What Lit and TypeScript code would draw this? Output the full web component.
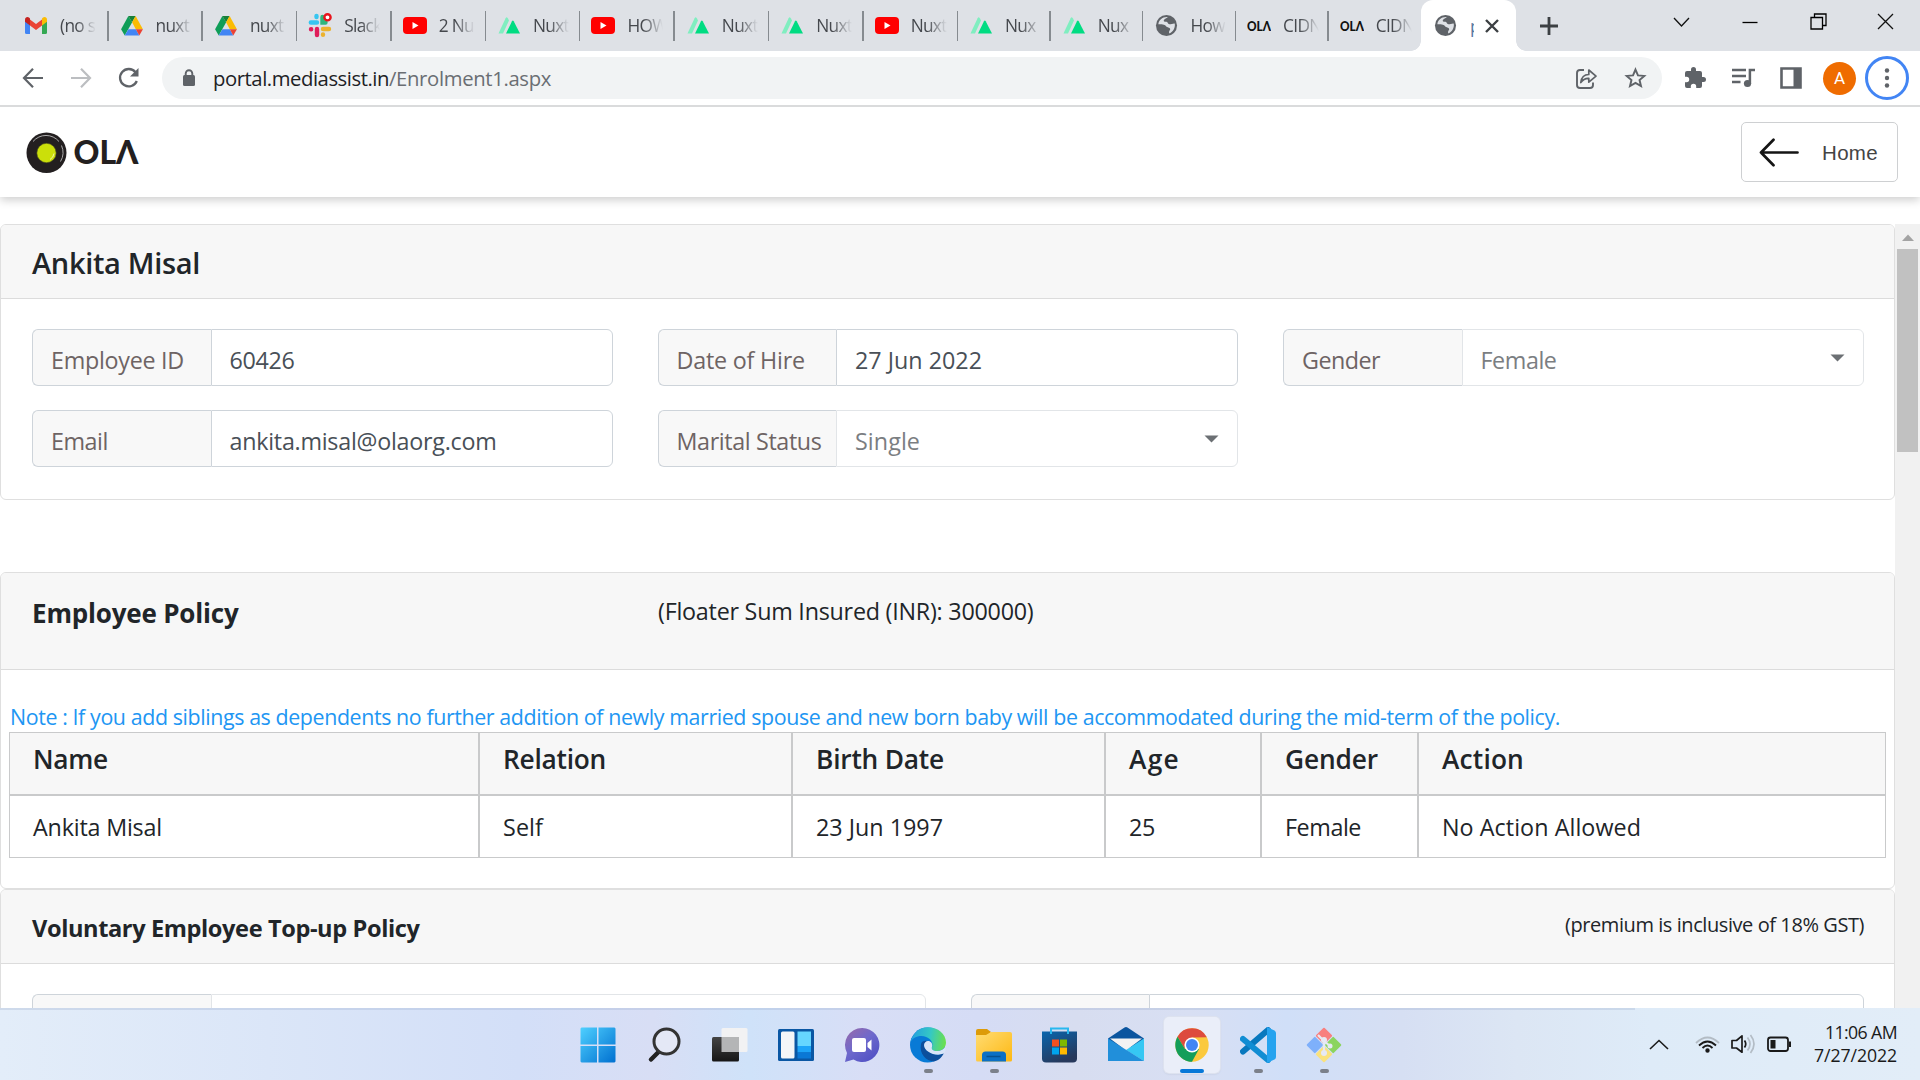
import { LitElement, html, css, svg, TemplateResult } from "lit";
import { customElement, property } from "lit/decorators.js";
import { classMap } from "lit/directives/class-map.js";

const drive = svg`<svg viewBox="0 0 24 22" width="22" height="20"><path fill="#0f9d58" d="M8 0 0 14.500 4 21.500 12.200 7z"/><path fill="#188038" d="M8 0h8l-3.900 7z"/><path fill="#fbbc04" d="M16 0 24 14.500h-7.800L12.100 7z"/><path fill="#4285f4" d="M8 14.500h8.200L20 21.500H4z"/><path fill="#ea4335" d="M16.200 14.500H24l-4 7z"/></svg>`;
const gmail = svg`<svg viewBox="0 0 22 17" width="22" height="17"><path fill="#4285f4" d="M0 4h5v13H1.500A1.500 1.500 0 0 1 0 15.500z"/><path fill="#34a853" d="M17 4h5v11.500a1.500 1.500 0 0 1-1.500 1.500H17z"/><path fill="#ea4335" d="M5 2.500 11 7l6-4.500V8.500L11 13 5 8.500z"/><path fill="#c5221f" d="M0 2.500C0 .2 2.500-.6 4 .600L5 1.500v7L0 4.800z"/><path fill="#fbbc04" d="M22 2.500C22 .2 19.500-.6 18 .600L17 1.500v7l5-3.700z"/></svg>`;
const slack = svg`<svg viewBox="0 0 24 25" width="24" height="25"><g stroke-width="4.400" stroke-linecap="round" fill="none"><path stroke="#36c5f0" d="M2.800 9.500H9M8.500 3v1"/><path stroke="#2eb67d" d="M14.500 4v5.500h3"/><path stroke="#ecb22e" d="M21 16h-6M15 21.500v.2"/><path stroke="#e01e5a" d="M9 22v-6M3 16.200h.2"/></g><circle cx="19.500" cy="4.300" r="3.100" fill="#fff" stroke="#e8141c" stroke-width="2.400"/></svg>`;
const youtube = svg`<svg viewBox="0 0 24 17" width="24" height="17"><rect width="24" height="17" rx="4" fill="#f00"/><path fill="#fff" d="M9.500 5v7l6-3.500z"/></svg>`;
const nuxt = svg`<svg viewBox="0 0 24 17" width="24" height="17"><path fill="#80eec0" d="M1.500 16.500 8.600 1.200q1-1.700 2.200 0L12 3.500 6 16.500z"/><path fill="#00dc82" d="M9 16.500 15 4.200q.8-1.300 1.700 0L23 16.500z"/></svg>`;
const globe = svg`<svg viewBox="0 0 24 24" width="23" height="23"><circle cx="12" cy="12" r="11" fill="#5f6368"/><path fill="#dee1e6" d="M13.500 3.200c-1 1.300-3.700 1.800-4.300 3.200-.5 1.300 1 1.800 2.600 1.700 1.700 0 1.300 2.400 3.300 2.700 1.700.2 2.700-1 5.500-.8.8 4.300-1.700 8.700-5.500 10.300-1-1-.3-2.600.5-3.500 1-1.300-.6-2.700-2.300-3-2.200-.3-1.700-2.300-4-2.600-2.200-.3-3.500-.7-5.800-.5C3.800 6.500 8 2.600 13.500 3.200z"/><path fill="#5f6368" d="M13.800 3.300l4.600 2.500 1.700 4c-2-1-2.500.7-4.500.6-1.600-.3-1-2-2.300-2.700s-2.600 0-2.900-.9c-.2-1.200 2.800-1.600 3.400-3.500z"/></svg>`;
const olaMini = svg`<svg viewBox="0 0 24 14" width="24" height="14"><text x="0" y="11.500" textLength="24" lengthAdjust="spacingAndGlyphs" font-family="Lato, sans-serif" font-weight="900" font-size="13" fill="#111">OLΛ</text></svg>`;

type Tab = { icon: TemplateResult; title: string; kind?: string };
const TABS: Tab[] = [
  { icon: gmail, title: "(no s", kind: "first" },
  { icon: drive, title: "nuxt" }, { icon: drive, title: "nuxt" },
  { icon: slack, title: "Slack" }, { icon: youtube, title: "2 Nu" },
  { icon: nuxt, title: "Nuxt" }, { icon: youtube, title: "HOW" },
  { icon: nuxt, title: "Nuxt" }, { icon: nuxt, title: "Nuxt" },
  { icon: youtube, title: "Nuxt" },
  { icon: nuxt, title: "Nux", kind: "slim" }, { icon: nuxt, title: "Nux", kind: "slim" },
  { icon: globe, title: "How", kind: "slim" },
  { icon: olaMini, title: "CIDN", kind: "slim" }, { icon: olaMini, title: "CIDN", kind: "slim" },
];

/* A line of text tracked so that it fills a given width. */
@customElement("fit-label")
class FitLabel extends LitElement {
  static styles = css`:host{display:inline-block;white-space:pre}span{display:inline-block}`;
  @property() text = "";
  @property({ type: Number }) w = 0;
  firstUpdated() {
    const s = this.renderRoot.querySelector("span")!;
    const natural = s.getBoundingClientRect().width;
    if (this.w) s.style.letterSpacing = `${(this.w - natural) / this.text.length}px`;
  }
  render() { return html`<span>${this.text}</span>`; }
}

@customElement("browser-chrome")
class BrowserChrome extends LitElement {
  static styles = css`
    :host{display:block;font-family:"Open Sans","Noto Sans",sans-serif}
    svg{display:block;flex:none}
    .strip{height:51px;background:#dee1e6;display:flex}
    .tab{width:94.4px;flex:none;box-sizing:border-box;display:flex;align-items:center;padding-left:11px;position:relative;color:#45484d;font-size:17.300px}
    .tab.first{width:108.5px;padding-left:24px}
    .tab.slim{width:92.7px}
    .tab::after{content:"";position:absolute;right:0;top:11px;width:1.500px;height:30px;background:#868b90}
    .tab.last::after{display:none}
    .ico{width:24px;display:flex;justify-content:center;margin-right:12px;flex:none}
    .name{width:36px;overflow:hidden;white-space:nowrap;letter-spacing:-.7px;line-height:30px;-webkit-mask-image:linear-gradient(90deg,#000 45%,transparent 100%);mask-image:linear-gradient(90deg,#000 45%,transparent 100%)}
    .active{width:95px;flex:none;background:#fff;border-radius:12px 12px 0 0;display:flex;align-items:center;padding-left:12.500px;box-sizing:border-box;position:relative;font-size:17.500px;color:#45484d}
    .active::before,.active::after{content:"";position:absolute;bottom:0;width:10px;height:10px}
    .active::before{left:-10px;background:radial-gradient(circle at 0 0,transparent 9.500px,#fff 10px)}
    .active::after{right:-10px;background:radial-gradient(circle at 100% 0,transparent 9.500px,#fff 10px)}
    .pp{width:4px;overflow:hidden;margin:0 11px 0 13px;color:#55779f}
    .plus{margin-left:23px;align-self:center}
    .win{margin-left:auto;display:flex;height:43px;align-items:center;padding-right:26px}
    .win svg+svg{margin-left:50px}
    .bar{height:54px;background:#fff;display:flex;align-items:center;padding-left:22px;border-bottom:2px solid #dadbdc}
    .nav{display:flex;gap:26px;margin-right:22px}
    .omni{width:1500px;height:42px;border-radius:21px;background:#f1f3f4;display:flex;align-items:center;padding:0 15px 0 20px;box-sizing:border-box;font-size:20.300px;color:#6a6e73}
    .omni .url{display:flex;margin-left:17px;line-height:40px}
    .host{color:#202124}
    .omni .end{margin-left:auto;display:flex;gap:26px}
    .ext{display:flex;align-items:center;gap:24px;margin-left:21px}
    .avatar{width:33px;height:33px;border-radius:50%;background:#ef6c00;color:#fff;font:17px/33px Roboto,sans-serif;text-align:center;margin-left:-3px}
    .menu{width:38px;height:38px;border:3px solid #4285f4;border-radius:50%;display:grid;place-items:center;margin-left:-15px}
  `;
  render() {
    return html`
      <div class="strip">
        ${TABS.map((t, i) => html`<div class=${classMap({ tab: true, first: t.kind === "first", slim: t.kind === "slim", last: i === TABS.length - 1 })}>
          <span class="ico">${t.icon}</span><span class="name">${t.title}</span></div>`)}
        <div class="active">${globe}<span class="pp">p</span><svg width="14" height="14"><path d="M1 1l12 12M13 1 1 13" stroke="#3c4043" stroke-width="2.400"/></svg></div>
        <svg class="plus" width="20" height="20"><path d="M10 1v18M1 10h18" stroke="#3c4043" stroke-width="2.800"/></svg>
        <div class="win">
          <svg width="17" height="12"><path d="M1 2l7.500 8L16 2" fill="none" stroke="#111" stroke-width="1.300"/></svg>
          <svg width="20" height="16"><path d="M2.500 8.500h15" stroke="#000" stroke-width="1.300"/></svg>
          <svg width="17" height="17"><path d="M1 4.500h11.500V16H1zM4.500 4.500V1H16v11.500h-3.500" fill="none" stroke="#000" stroke-width="1.300"/></svg>
          <svg width="17" height="17"><path d="M1 1l15 15M16 1 1 16" stroke="#111" stroke-width="1.300"/></svg>
        </div>
      </div>
      <div class="bar">
        <div class="nav">
          <svg width="22" height="22"><path d="M11 1.800 2 11l9 9.200M2 11h19" fill="none" stroke="#5f6368" stroke-width="2.200"/></svg>
          <svg width="22" height="22"><path d="M11 1.800 20 11l-9 9.200M20 11H1" fill="none" stroke="#bcbec1" stroke-width="2.200"/></svg>
          <svg width="22" height="22"><path d="M18.800 14A8.700 8.700 0 1 1 17.500 5.200" fill="none" stroke="#5f6368" stroke-width="2.300"/><path d="M20.500 1v8.500H12z" fill="#5f6368"/></svg>
        </div>
        <div class="omni">
          <svg width="14" height="18"><rect x="1" y="6" width="12" height="11" rx="1.500" fill="#5f6368"/><path d="M3.700 7V4.500a3.300 3.300 0 0 1 6.600 0V7" fill="none" stroke="#5f6368" stroke-width="1.900"/></svg>
          <span class="url"><fit-label class="host" text="portal.mediassist.in" w="176"></fit-label><fit-label text="/Enrolment1.aspx" w="162"></fit-label></span>
          <div class="end">
            <svg width="23" height="22"><path d="M9 3H5Q2 3 2 6v12q0 3 3 3h10q3 0 3-3v-2.500" fill="none" stroke="#5f6368" stroke-width="1.900"/><path d="M5.800 15.500c.6-5 3.500-8 8-8V3l7.200 6.200-7.200 6V11.300c-4-.2-6 1.200-8 4.200z" fill="none" stroke="#5f6368" stroke-width="1.700" stroke-linejoin="round"/></svg>
            <svg width="23" height="22" viewBox="0 0 24 24"><path d="m12 2.800 2.700 6.300 6.900.6-5.200 4.500 1.600 6.700-6-3.500-6 3.500 1.600-6.700-5.200-4.500 6.900-.6z" fill="none" stroke="#5f6368" stroke-width="2.100"/></svg>
          </div>
        </div>
        <div class="ext">
          <svg width="24" height="24" viewBox="0 0 24 24"><path fill="#5f6368" d="M20.500 11H19V7a2 2 0 0 0-2-2h-4V3.500a2.500 2.500 0 0 0-5 0V5H4a2 2 0 0 0-2 2v3.800h1.500a2.700 2.700 0 0 1 0 5.400H2V20a2 2 0 0 0 2 2h3.800v-1.500a2.700 2.700 0 0 1 5.400 0V22H17a2 2 0 0 0 2-2v-4h1.500a2.500 2.500 0 0 0 0-5z"/></svg>
          <svg width="25" height="22"><path d="M1 3h14M1 9h14M1 15h8.500" stroke="#5f6368" stroke-width="2.300"/><circle cx="16.500" cy="16.500" r="3.600" fill="#5f6368"/><path d="M18.900 17V3H24" fill="none" stroke="#5f6368" stroke-width="2.500"/></svg>
          <svg width="22" height="22"><path d="M1.500 1.500h19v19h-19z" fill="none" stroke="#5f6368" stroke-width="2.600"/><path d="M13.500 1h7v20h-7z" fill="#5f6368"/></svg>
          <div class="avatar">A</div>
          <div class="menu"><svg width="6" height="20"><g fill="#5f6368"><circle cx="3" cy="2.500" r="2.200"/><circle cx="3" cy="10" r="2.200"/><circle cx="3" cy="17.500" r="2.200"/></g></svg></div>
        </div>
      </div>`;
  }
}

@customElement("input-field")
class InputField extends LitElement {
  static styles = css`
    :host{display:block}
    .box{display:flex;height:57px;box-sizing:border-box;font-size:23.300px;line-height:30px}
    .label,.value{box-sizing:border-box;border:1.500px solid #ced4da;padding:14.500px 0 0 18px}
    .label{width:178.500px;background:#f8f8f8;border-radius:6px 0 0 6px;color:#6e6464;border-right:0;flex:none}
    .value{flex:1;border-radius:0 6px 6px 0;color:#495057;display:flex;background:#fff}
    .select .value{border-color:#e2e5e8;color:#7b7e82}
    svg{margin:9px 18px 0 auto}
  `;
  @property() label = "";
  @property() value = "";
  @property({ type: Number }) lw = 0;
  @property({ type: Number }) vw = 0;
  @property({ type: Boolean }) select = false;
  render() {
    return html`<div class=${classMap({ box: true, select: this.select })}>
      <div class="label"><fit-label .text=${this.label} .w=${this.lw}></fit-label></div>
      <div class="value"><fit-label .text=${this.value} .w=${this.vw}></fit-label>
      ${this.select && this.value ? html`<svg width="15" height="8"><path d="M.5.500h14L7.500 7.500z" fill="#6c7074"/></svg>` : ""}</div></div>`;
  }
}

const COLUMNS: [string, number, string, number][] = [
  ["Name", 75, "Ankita Misal", 129], ["Relation", 103, "Self", 40],
  ["Birth Date", 128, "23 Jun 1997", 127], ["Age", 51, "25", 26],
  ["Gender", 93, "Female", 76], ["Action", 82, "No Action Allowed", 199],
];

@customElement("portal-page")
class PortalPage extends LitElement {
  static styles = css`
    :host{display:flex;flex-direction:column;height:901px;overflow:hidden;background:#fff;font-family:"Open Sans","Noto Sans",sans-serif;color:#212529}
    .top{height:90px;flex:none;display:flex;align-items:center;justify-content:space-between;padding:0 22px 0 26px;box-shadow:0 3px 9px rgba(0,0,0,.2);box-sizing:border-box;position:relative}
    .home{width:157px;height:60px;box-sizing:border-box;border:1.500px solid #ced0d2;border-radius:5px;display:flex;align-items:center;padding-left:17px;gap:23px;font:20.500px/26px "Liberation Sans",Arial,sans-serif;color:#444}
    .home fit-label{padding-top:2px}
    .main{display:flex;margin-top:27px;height:784px;overflow:hidden}
    .content{width:1895px;flex:none;height:784px;overflow:hidden}
    .card{border:1.500px solid #dfdfdf;border-radius:6px;box-sizing:border-box;overflow:hidden}
    .who{height:276px;margin-bottom:72px}
    .policy{height:317px}
    .topup{height:300px}
    .head{background:#f7f7f7;border-bottom:1.500px solid #dcdcdc;box-sizing:border-box;height:74px;padding:0 30px 0 31px;display:flex;line-height:74px}
    .head .t1{font-size:29px;font-weight:600;padding-top:1px}
    .policy .head{height:97px}
    .t2{font-size:26px;font-weight:700;width:626px;padding-top:3px}
    .floater{font-size:23.300px;padding-top:1px}
    .t3{font-size:23.600px;font-weight:700;padding-top:1px}
    .gst{font-size:20px;margin-left:auto;line-height:70px}
    .grid{display:grid;grid-template-columns:repeat(3,580.500px);column-gap:45px;row-gap:24px;padding:30px 30px 0 31px}
    .duo{display:grid;grid-template-columns:893.500px 893.500px;column-gap:45px;padding:30px 30px 0 31px}
    .note{font-size:21.400px;line-height:30px;padding:32px 8px 0 9px;color:#2196f3}
    .note fit-label{display:block;height:30px}
    .table{margin:0 8px;display:grid;grid-template-columns:468px 313px 313px 156px 157px 1fr;border:1.500px solid #c9cacb;box-sizing:border-box;height:126px;grid-template-rows:63px 1fr}
    .th,.td{border-left:2px solid #c9cacb;padding-left:23px;display:flex;align-items:center}
    .th{background:#f7f7f7;font-size:26.300px;font-weight:600;border-bottom:2px solid #c9cacb;padding-bottom:9px;box-sizing:border-box}
    .td{font-size:23.300px;padding-top:1px}
    .start{border-left:0}
    .scroll{width:25px;background:#f1f1f1;height:784px;display:flex;flex-direction:column;align-items:center}
    .scroll svg{margin:10px 0 8px;display:block}
    .thumb{width:21px;height:203px;background:#c1c1c1}
  `;
  render() {
    return html`
      <div class="top">
        <svg width="114" height="48" viewBox="26 127.500 114 48">
          <ellipse cx="46.500" cy="152.300" rx="20" ry="20.300" fill="#231f20"/>
          <path d="M33 141a17 17 0 0 1 26 0M61.500 145a17.500 17.500 0 0 1-1 16" fill="none" stroke="#bbb" stroke-width=".9"/>
          <circle cx="46.500" cy="152.500" r="9.700" fill="#cbdf0a" stroke="#4b501c" stroke-width=".6"/>
          <path d="M50 159a8 8 0 0 0 4-6" fill="none" stroke="#f2f8a8" stroke-width="1"/>
          <text x="73.500" y="163.500" textLength="65" lengthAdjust="spacingAndGlyphs" font-family="Lato, sans-serif" font-weight="900" font-size="32.500" fill="#231f20" aria-label="OLA">OLΛ</text>
        </svg>
        <div class="home"><svg width="40" height="29"><path d="M14.500 1.800 2 14.500l12.500 12.700M2 14.500h36.500" fill="none" stroke="#151515" stroke-width="2.700" stroke-linecap="round" stroke-linejoin="round"/></svg><fit-label text="Home" w="56"></fit-label></div>
      </div>
      <div class="main">
        <div class="content">
          <div class="card who">
            <div class="head"><fit-label class="t1" text="Ankita Misal" w="168"></fit-label></div>
            <div class="grid">
              <input-field label="Employee ID" value="60426" lw="133" vw="65"></input-field>
              <input-field label="Date of Hire" value="27 Jun 2022" lw="128.500" vw="127"></input-field>
              <input-field select label="Gender" value="Female" lw="78" vw="76"></input-field>
              <input-field label="Email" value="ankita.misal@olaorg.com" lw="57" vw="267"></input-field>
              <input-field select label="Marital Status" value="Single" lw="145" vw="65"></input-field>
            </div>
          </div>
          <div class="card policy">
            <div class="head"><fit-label class="t2" text="Employee Policy" w="206.500"></fit-label><fit-label class="floater" text="(Floater Sum Insured (INR): 300000)" w="375.500"></fit-label></div>
            <div class="note"><fit-label text="Note : If you add siblings as dependents no further addition of newly married spouse and new born baby will be accommodated during the mid-term of the policy." w="1550"></fit-label></div>
            <div class="table">
              ${COLUMNS.map((c, i) => html`<div class=${classMap({ th: true, start: i === 0 })}><fit-label .text=${c[0]} .w=${c[1]}></fit-label></div>`)}
              ${COLUMNS.map((c, i) => html`<div class=${classMap({ td: true, start: i === 0 })}><fit-label .text=${c[2]} .w=${c[3]}></fit-label></div>`)}
            </div>
          </div>
          <div class="card topup">
            <div class="head"><fit-label class="t3" text="Voluntary Employee Top-up Policy" w="387.500"></fit-label><fit-label class="gst" text="(premium is inclusive of 18% GST)" w="299"></fit-label></div>
            <div class="duo"><input-field select></input-field><input-field></input-field></div>
          </div>
        </div>
        <div class="scroll"><svg width="12" height="7"><path d="M0 7 6 .500 12 7z" fill="#a3a3a3"/></svg><div class="thumb"></div></div>
      </div>`;
  }
}

const APPS: { icon: TemplateResult; state?: string }[] = [
  { icon: svg`<svg width="36" height="36"><defs><linearGradient id="w" x1="0" y1="0" x2="1" y2="1"><stop stop-color="#4fd0ff"/><stop offset="1" stop-color="#0070d0"/></linearGradient></defs><path fill="url(#w)" d="M1.500.500H17v17H.5v-16zM18.500.500h16l1 1v16h-17zM.5 19H17v16.500H1.500l-1-1zM18.500 19h17v15.500l-1 1h-16z"/></svg>` },
  { icon: svg`<svg width="36" height="36"><path d="M13.500 24 5 32.500" stroke="#222" stroke-width="4.500" stroke-linecap="round"/><circle cx="20.500" cy="14.500" r="12.500" fill="#e4e8f6" stroke="#333" stroke-width="3"/></svg>` },
  { icon: svg`<svg width="36" height="36"><defs><linearGradient id="t" x2="0" y2="1"><stop stop-color="#444"/><stop offset="1" stop-color="#161616"/></linearGradient></defs><rect x="9.500" y="1" width="26" height="24" rx="1.500" fill="#f2f2f3"/><rect y="10" width="27" height="24.500" rx="1.500" fill="url(#t)"/><path d="M9.500 10H27v15H9.500z" fill="#b4b5b6"/></svg>` },
  { icon: svg`<svg width="36" height="36"><rect y="2" width="36" height="32" rx="1.500" fill="#0a57a4"/><rect x="3" y="4.500" width="13.500" height="27" rx="1.500" fill="#f4f6f8"/><path fill="#66d6ff" d="M19.500 4.500H33V19H19.500z"/><path fill="#1da4f8" d="M19.500 19H33v6.500H19.500z"/><path fill="#0a78d6" d="M19.500 25.500H33v6H19.500z"/></svg>` },
  { icon: svg`<svg width="36" height="36"><defs><linearGradient id="c" x1="0" y1="0" x2=".8" y2="1"><stop stop-color="#9a6aa8"/><stop offset=".5" stop-color="#6e69cc"/><stop offset="1" stop-color="#5050c4"/></linearGradient></defs><path fill="url(#c)" d="M18 1a17 17 0 1 1-8.500 31.500L1 35l2-9A17 17 0 0 1 18 1z"/><rect x="8" y="11" width="14" height="14" rx="2" fill="#fff"/><path fill="#fff" d="m23.500 16 4-3.500v11l-4-3.500z"/></svg>` },
  { icon: svg`<svg width="36" height="36"><defs><linearGradient id="e" x1="0" y1=".4" x2="1" y2=".5"><stop stop-color="#239fe0"/><stop offset=".55" stop-color="#35c8c4"/><stop offset="1" stop-color="#6be04c"/></linearGradient></defs><circle cx="17.500" cy="18" r="17.500" fill="#087ad6"/><path fill="url(#e)" d="M.5 15C3 6 9 .200 18 .200 28 .200 36 7 36 15.500c0 5-4 8.500-9 8.500-4 0-6.500-1.500-4.800-4C24 14 18 9 11.500 9 6 9 2.500 11.500.5 15z"/><path fill="#0c4f9c" d="M11 17c-2 10 5 17 13 17.500 4-.8 8-4 10-8.500-6 3-14 1-16-2.500-2-3-1-6.500 1-9-4-1.500-7-.5-8 2.500z"/><path fill="#d8e5f8" d="M18 14c3 0 4.500 2.500 4.200 5-.8 2.500-.8 5 4.800 5 4 0 7-2 8.500-4.500v4.500l-1.800 2.500C26 30 14 25 14 18c0-2 2-4 4-4z"/></svg>`, state: "open" },
  { icon: svg`<svg width="36" height="36"><defs><linearGradient id="f" x2="1" y2="1"><stop stop-color="#ffdc73"/><stop offset="1" stop-color="#fdb813"/></linearGradient></defs><path d="M0 4q0-2 2-2h9l4 3-4 5H0z" fill="#dd9b08"/><path fill="url(#f)" d="M0 8h10l5-3h19q2 0 2 2v26q0 1.500-1.500 1.500h-33Q0 34.500 0 33z"/><path d="M6 34.500V28q0-3.500 3.500-3.500h17Q30 24.500 30 28v6.500z" fill="#0b70c5"/><path d="M10.500 29.500h14" stroke="#07508f" stroke-width="1.500"/></svg>`, state: "open" },
  { icon: svg`<svg width="36" height="36"><defs><linearGradient id="s" x2=".5" y2="1"><stop stop-color="#0965ae"/><stop offset="1" stop-color="#27395c"/></linearGradient></defs><path fill="url(#s)" d="M0 4.500h35v27q0 4-4 4H4q-4 0-4-4z"/><path d="M9 7V1.500h17V7" fill="none" stroke="#28b8ef" stroke-width="2"/><path fill="#f25022" d="M10 12.500h7v7h-7z"/><path fill="#7fba00" d="M18 12.500h7v7h-7z"/><path fill="#00a4ef" d="M10 20.500h7v7h-7z"/><path fill="#ffb900" d="M18 20.500h7v7h-7z"/></svg>` },
  { icon: svg`<svg width="36" height="36"><path fill="#0b559f" d="M0 11.500 16.500.500q1.500-.8 3 0L36 11.500l-4 9H5z"/><path fill="#f3f3f3" d="M2 11.500h32l-16 12z"/><path fill="#36c7f3" d="M36 11.500V34L18 23z"/><path fill="#218fda" d="M0 11.500 36 34H0z"/></svg>` },
  { icon: svg`<svg width="36" height="36" viewBox="-18 -18 36 36"><circle r="16.700" fill="#fbc93d"/><path fill="#dd4b3e" d="M-14.500-8.300A16.700 16.700 0 0 1 14.800-7.800L0-7.500-7 4z"/><path fill="#139e5a" d="M-14.500-8.300A16.700 16.700 0 0 0 0 16.700L7 4-7 4z"/><circle r="7.600" fill="#fff"/><circle r="6" fill="#4285f4"/></svg>`, state: "current" },
  { icon: svg`<svg width="36" height="36"><path d="M3 24.500 28 3" stroke="#0878be" stroke-width="6" stroke-linecap="round"/><path d="M3 12 28 33" stroke="#118dd3" stroke-width="6" stroke-linecap="round"/><path fill="#25a3ef" d="M27 0l7.500 3.500Q36 4.500 36 6v24q0 1.500-1.500 2.500L27 36z"/></svg>`, state: "open" },
  { icon: svg`<svg width="36" height="36"><g transform="rotate(45 18 18)"><rect x="5.500" y="5.500" width="12" height="12" rx="1" fill="#f87f7f"/><rect x="18.500" y="5.500" width="12" height="12" rx="1" fill="#8bd45f"/><rect x="5.500" y="18.500" width="12" height="12" rx="1" fill="#7eb0fb"/><rect x="18.500" y="18.500" width="12" height="12" rx="1" fill="#fae27d"/></g><path d="M12 8l6 6v12M18 14l6 5" fill="none" stroke="#e6e9f5" stroke-width="2.200"/><g fill="#e6e9f5"><circle cx="18" cy="13" r="3"/><circle cx="18" cy="26" r="3"/><circle cx="24" cy="19" r="2.500"/></g></svg>`, state: "open" },
];

@customElement("task-bar")
class TaskBar extends LitElement {
  static styles = css`
    :host{display:flex;height:72px;box-sizing:border-box;font-family:"Open Sans","Noto Sans",sans-serif;background:linear-gradient(90deg,#e3edf9 0,#dbe6f8 14%,#d3dff8 27%,#d8def5 34%,#cfe2f9 39%,#d8def6 45%,#d5dcf5 51%,#d7ddf0 56%,#d8dff3 62%,#d0dff8 67%,#d6dff3 73%,#dce6f4 79%,#deebf8 86%,#e2edf8 100%)}
    .edge{position:absolute;width:1635px;height:2px;background:rgba(150,170,200,.28)}
    .apps{display:flex;margin-left:565px;padding-top:9px}
    .app{width:56px;height:56px;margin:0 5px;display:flex;flex-direction:column;align-items:center;padding-top:10px;box-sizing:border-box;border-radius:5px}
    .app svg{display:block;flex:none}
    .app.current{background:#eaeef9;box-shadow:0 0 0 1px #dde2ef,0 1px 2px #b9c2d6}
    .dot{width:9px;height:5px;border-radius:3px;background:#7b808a;margin-top:6px}
    .current .dot{width:24px;background:#0878d8}
    .tray{margin-left:auto;padding:18px 23px 0 0;display:flex;color:#1a1a1a}
    .chev{margin:13px 26px 0 0}
    .sys{display:flex;gap:11px;margin:8px 22px 0 0}
    .clock{width:83px;text-align:right;font-size:17.700px;line-height:23px;margin-top:-5px;display:flex;flex-direction:column;align-items:flex-end}
  `;
  render() {
    return html`<div class="edge"></div><div class="apps">${APPS.map((a) => html`<div class=${classMap({ app: true, current: a.state === "current" })}>${a.icon}${a.state ? html`<i class="dot"></i>` : ""}</div>`)}</div>
      <div class="tray">
        <svg class="chev" width="20" height="11"><path d="m1 10 9-8.500L19 10" fill="none" stroke="#1a1a1a" stroke-width="1.600"/></svg>
        <div class="sys">
          <svg width="25" height="20" fill="none" stroke="#1a1a1a" stroke-width="1.800"><path d="M1 9q11.500-11 23 0" stroke="#b3bcc5"/><path d="M4 11.500q8.500-8 17 0M7.500 14q5-5 10 0"/><circle cx="12.500" cy="16.500" r="1.300" fill="#1a1a1a"/></svg>
          <svg width="25" height="20" fill="none" stroke="#1a1a1a" stroke-width="1.700"><path d="M1 6.500h4.500L11 1.800v16.400L5.500 14H1z" stroke-linejoin="round"/><path d="M13.500 6.500q2.500 3.500 0 7"/><path d="M16.500 3.500q5 6.500 0 13M19.500 1q7 9 0 18" stroke="#b3bcc5"/></svg>
          <svg width="25" height="20"><rect x="1" y="3.500" width="20" height="13.500" rx="2.500" fill="none" stroke="#1a1a1a" stroke-width="1.800"/><path d="M3.500 6h5v8.500h-5zM22 7.500h2V13h-2z" fill="#1a1a1a"/></svg>
        </div>
        <div class="clock"><fit-label text="11:06 AM" w="72"></fit-label><fit-label text="7/27/2022" w="83"></fit-label></div>
      </div>`;
  }
}

@customElement("app-root")
class AppRoot extends LitElement {
  static styles = css`:host{display:flex;flex-direction:column;width:1920px;height:1080px;overflow:hidden;background:#fff}`;
  render() { return html`<browser-chrome></browser-chrome><portal-page></portal-page><task-bar></task-bar>`; }
}
